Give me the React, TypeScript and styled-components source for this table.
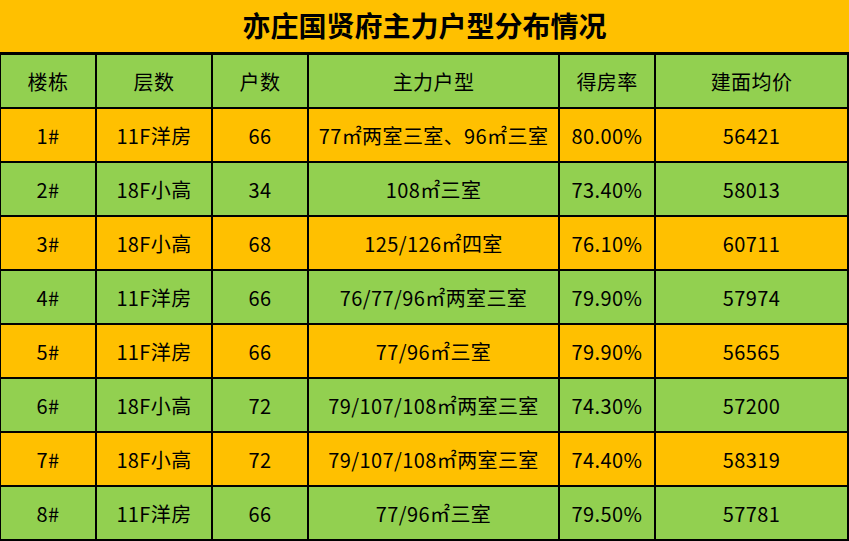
import React from 'react';
import styled, { createGlobalStyle } from 'styled-components';

const GlobalStyle = createGlobalStyle`
  html, body {
    margin: 0;
    padding: 0;
    background: #ffffff;
  }
  body {
    font-family: "Noto Sans CJK SC", "Noto Sans", sans-serif;
    color: #000000;
  }
`;

const YELLOW = '#ffc000';
const GREEN = '#92d050';

const Sheet = styled.div`
  width: 849px;
  height: 541px;
  display: flex;
  flex-direction: column;
`;

const Title = styled.div`
  height: 52px;
  background-color: ${YELLOW};
  display: flex;
  align-items: center;
  justify-content: center;
  font-size: 28px;
  font-weight: 700;
  padding-bottom: 2px;
  box-sizing: border-box;
`;

const Grid = styled.div`
  display: grid;
  grid-template-columns: 94px 114px 94px 249px 94px 191px;
  grid-auto-rows: 52px;
  gap: 2px;
  padding: 3px 2px 2px 1px;
  background-color: #000000;
`;

const Cell = styled.div<{ $bg: string }>`
  background-color: ${(p) => p.$bg};
  display: flex;
  align-items: center;
  justify-content: center;
  font-size: 20px;
  letter-spacing: 0.4px;
  white-space: nowrap;
  overflow: hidden;
`;

const headers = ['楼栋', '层数', '户数', '主力户型', '得房率', '建面均价'];

const rows = [
  ['1#', '11F洋房', '66', '77㎡两室三室、96㎡三室', '80.00%', '56421'],
  ['2#', '18F小高', '34', '108㎡三室', '73.40%', '58013'],
  ['3#', '18F小高', '68', '125/126㎡四室', '76.10%', '60711'],
  ['4#', '11F洋房', '66', '76/77/96㎡两室三室', '79.90%', '57974'],
  ['5#', '11F洋房', '66', '77/96㎡三室', '79.90%', '56565'],
  ['6#', '18F小高', '72', '79/107/108㎡两室三室', '74.30%', '57200'],
  ['7#', '18F小高', '72', '79/107/108㎡两室三室', '74.40%', '58319'],
  ['8#', '11F洋房', '66', '77/96㎡三室', '79.50%', '57781'],
];

export default function App() {
  return (
    <>
      <GlobalStyle />
      <Sheet>
        <Title>亦庄国贤府主力户型分布情况</Title>
        <Grid>
          {headers.map((h) => (
            <Cell key={h} $bg={GREEN}>
              {h}
            </Cell>
          ))}
          {rows.map((row, i) =>
            row.map((v, j) => (
              <Cell key={`${i}-${j}`} $bg={i % 2 === 0 ? YELLOW : GREEN}>
                {v}
              </Cell>
            ))
          )}
        </Grid>
      </Sheet>
    </>
  );
}
